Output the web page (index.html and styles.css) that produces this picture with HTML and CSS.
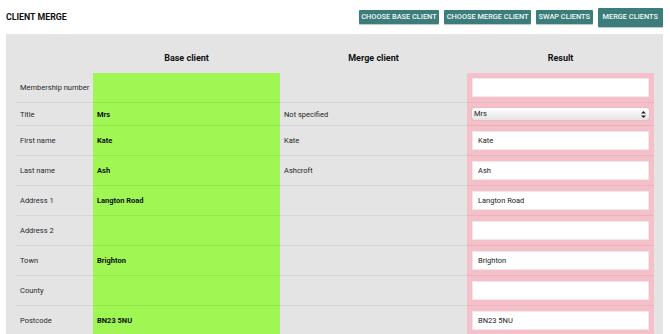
FILE: index.html
```html
<!DOCTYPE html>
<html lang="en">
<head>
    <meta charset="UTF-8">
    <meta name="viewport" content="width=device-width, initial-scale=1.0">
    <title>Client merge</title>
    <link rel="stylesheet" href="styles.css">
</head>
<body>
    <div class="top-bar">
        <h1>CLIENT MERGE</h1>
        <div class="actions">
            <button class="btn">Choose base client</button>
            <button class="btn">Choose merge client</button>
            <button class="btn">Swap clients</button>
            <button class="btn btn-main">Merge clients</button>
        </div>
    </div>

    <div class="panel">
        <table class="merge-table">
            <colgroup>
                <col class="col-label">
                <col class="col-data">
                <col class="col-data">
                <col class="col-data">
            </colgroup>
            <thead>
                <tr>
                    <th></th>
                    <th>Base client</th>
                    <th>Merge client</th>
                    <th>Result</th>
                </tr>
            </thead>
            <tbody>
                <tr>
                    <td class="label">Membership number</td>
                    <td class="base"></td>
                    <td class="other"></td>
                    <td class="result"><input type="text" value=""></td>
                </tr>
                <tr>
                    <td class="label">Title</td>
                    <td class="base">Mrs</td>
                    <td class="other">Not specified</td>
                    <td class="result">
                        <select>
                            <option>Mrs</option>
                            <option>Not specified</option>
                        </select>
                    </td>
                </tr>
                <tr>
                    <td class="label">First name</td>
                    <td class="base">Kate</td>
                    <td class="other">Kate</td>
                    <td class="result"><input type="text" value="Kate"></td>
                </tr>
                <tr>
                    <td class="label">Last name</td>
                    <td class="base">Ash</td>
                    <td class="other">Ashcroft</td>
                    <td class="result"><input type="text" value="Ash"></td>
                </tr>
                <tr>
                    <td class="label">Address 1</td>
                    <td class="base">Langton Road</td>
                    <td class="other"></td>
                    <td class="result"><input type="text" value="Langton Road"></td>
                </tr>
                <tr>
                    <td class="label">Address 2</td>
                    <td class="base"></td>
                    <td class="other"></td>
                    <td class="result"><input type="text" value=""></td>
                </tr>
                <tr>
                    <td class="label">Town</td>
                    <td class="base">Brighton</td>
                    <td class="other"></td>
                    <td class="result"><input type="text" value="Brighton"></td>
                </tr>
                <tr>
                    <td class="label">County</td>
                    <td class="base"></td>
                    <td class="other"></td>
                    <td class="result"><input type="text" value=""></td>
                </tr>
                <tr>
                    <td class="label">Postcode</td>
                    <td class="base">BN23 5NU</td>
                    <td class="other"></td>
                    <td class="result"><input type="text" value="BN23 5NU"></td>
                </tr>
            </tbody>
        </table>
    </div>
</body>
</html>
```

FILE: styles.css
```css
body {
    margin: 0;
    padding: 0 7px 0 6px;
    background: #fff;
    font-family: Roboto, "Liberation Sans", Arial, sans-serif;
    color: #1e1e1e;
}
.top-bar {
    height: 34px;
    display: flex;
    align-items: center;
    justify-content: space-between;
}
.top-bar h1 {
    margin: 0;
    font-size: 8.8px;
    font-weight: 700;
    color: #111;
}
.actions {
    display: flex;
    align-items: center;
    gap: 5px;
}
.btn {
    font-family: Roboto, "Liberation Sans", Arial, sans-serif;
    font-size: 7.4px;
    font-weight: 500;
    text-transform: uppercase;
    color: #f2f7f7;
    background-color: #3b7d7a;
    border: none;
    border-radius: 1px;
    padding: 3px 2.5px;
    line-height: 8px;
    box-shadow: 0 1px 1px rgba(0, 0, 0, 0.25);
    cursor: pointer;
}
.btn-main {
    padding: 5.5px 5px;
}
.panel {
    background: #e4e4e4;
    padding: 8px 9px 0 10px;
}
.merge-table {
    width: 100%;
    border-collapse: collapse;
    table-layout: fixed;
    font-size: 7.5px;
}
.col-label {
    width: 77px;
}
.col-data {
    width: 187px;
}
.merge-table th {
    font-size: 9px;
    font-weight: 700;
    color: #111;
    height: 31px;
    padding: 0;
    text-align: center;
}
.merge-table td {
    padding: 5px 4px;
    border-top: 1px solid rgba(0, 0, 0, 0.06);
    vertical-align: middle;
    white-space: nowrap;
    line-height: 9px;
}
.merge-table tbody tr:first-child td {
    border-top: none;
}
.merge-table td.label {
    color: #2a2a2a;
}
.merge-table td.base {
    background: #a0f653;
    font-weight: 700;
    color: #111;
}
.merge-table td.result {
    background: #f5c0c9;
    padding: 5px;
}
.result input {
    display: block;
    box-sizing: border-box;
    width: 100%;
    height: 19px;
    border: 1px solid #f1e6e8;
    background: #fff;
    padding: 0 5px;
    font-family: Roboto, "Liberation Sans", Arial, sans-serif;
    font-size: 7.5px;
    color: #222;
    outline: none;
}
.result select {
    display: block;
    box-sizing: border-box;
    width: 100%;
    height: 12px;
    -webkit-appearance: none;
    appearance: none;
    border: none;
    border-radius: 2px;
    padding: 0 2px;
    font-family: Roboto, "Liberation Sans", Arial, sans-serif;
    font-size: 7.5px;
    line-height: 12px;
    color: #222;
    background-image: url("data:image/svg+xml;utf8,<svg xmlns='http://www.w3.org/2000/svg' width='5' height='7' viewBox='0 0 5 7'><path d='M2.5 0 L5 2.6 H0 Z M2.5 7 L0 4.4 H5 Z' fill='%23222'/></svg>"),
        linear-gradient(#ffffff, #e4e4e4);
    background-repeat: no-repeat, no-repeat;
    background-position: right 3px center, 0 0;
    box-shadow: 0 0 1px rgba(0, 0, 0, 0.35);
}
```
